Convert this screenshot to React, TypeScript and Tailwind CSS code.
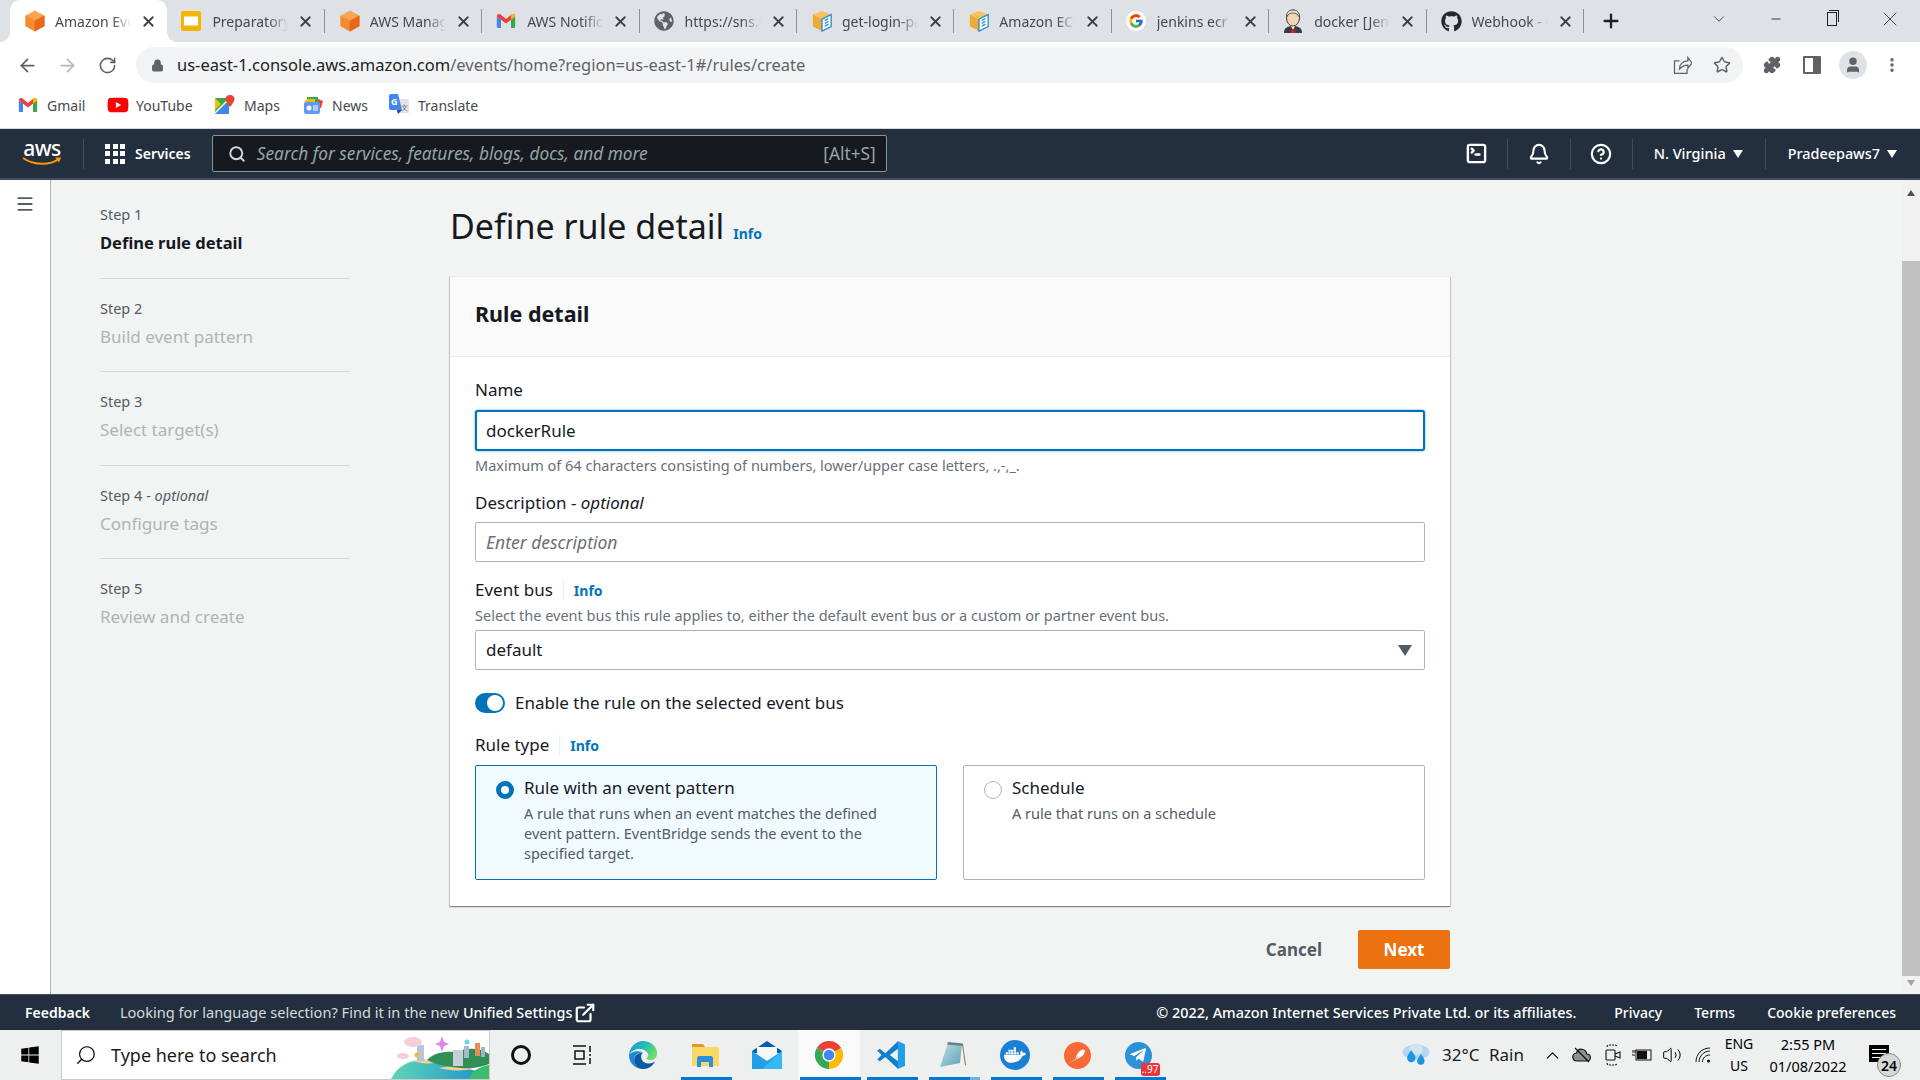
import { ReactNode } from "react";
import {
  ArrowLeft,
  ArrowRight,
  RotateCw,
  Lock,
  Star,
  Puzzle,
  User,
  EllipsisVertical,
  X,
  Plus,
  ChevronDown,
  Minus,
  Search,
  Bell,
  CircleHelp,
  Menu,
  SquareTerminal,
  ExternalLink,
  ChevronUp,
  Volume2,
} from "lucide-react";
import { FaGithub, FaWindows, FaDocker, FaTelegramPlane, FaYoutube, FaGlobeAmericas } from "react-icons/fa";
import { FcGoogle } from "react-icons/fc";

function Cube({ size = 22 }: { size?: number }) {
  return (
    <svg width={size} height={size} viewBox="0 0 24 24">
      <path d="M12 1l10 5.500L12 12 2 6.500z" fill="#f8a552" strokeLinejoin="round" stroke="#f8a552" />
      <path d="M2 6.500L12 12v11L2 17.500z" fill="#f58a2e" strokeLinejoin="round" stroke="#f58a2e" />
      <path d="M22 6.500L12 12v11l10-5.500z" fill="#e8681a" strokeLinejoin="round" stroke="#e8681a" />
    </svg>
  );
}

function DocCube() {
  return (
    <svg width="22" height="22" viewBox="0 0 24 24">
      <path d="M12 1l10 4-10 5L2 5z" fill="#f7c161" />
      <path d="M2 5l10 5v13L2 18z" fill="#efaa33" />
      <path d="M12 10l10-5v13l-10 5z" fill="#fff" stroke="#2f8fd0" strokeWidth="1.500" />
      <path d="M15 11.500l4-2M15 14.500l4-2M15 17.500l4-2" stroke="#2f8fd0" strokeWidth="1.500" />
    </svg>
  );
}

function Gmail({ size = 20 }: { size?: number }) {
  return (
    <svg width={size} height={size} viewBox="0 0 24 24">
      <path d="M1 7v12a1.500 1.500 0 0 0 1.500 1.500H6V10z" fill="#4285f4" />
      <path d="M23 7v12a1.500 1.500 0 0 1-1.500 1.500H18V10z" fill="#34a853" />
      <path d="M1 6.500C1 4 4 3 5.500 4.300L12 9.500l6.500-5.200C20 3 23 4 23 6.500L18 10.500 12 15l-6-4.500z" fill="#ea4335" />
      <path d="M18 10.500V4.800l.5-.5C20 3 23 4 23 6.500z" fill="#fbbc04" />
    </svg>
  );
}

function Slides() {
  return (
    <svg width="20" height="20" viewBox="0 0 20 20">
      <rect width="20" height="20" rx="2" fill="#f4b400" />
      <rect x="3" y="5.500" width="14" height="9" fill="#fff" />
    </svg>
  );
}

function Jenkins() {
  return (
    <svg width="20" height="24" viewBox="0 0 20 24">
      <path d="M1 24c0-5 3-7 9-7s9 2 9 7z" fill="#3b3b47" />
      <path d="M8 17h4l-2 4z" fill="#fff" />
      <path d="M8.500 20h3l1 4h-5z" fill="#c0272d" />
      <ellipse cx="10" cy="9" rx="6.500" ry="8" fill="#f0d6b5" stroke="#4a3a30" strokeWidth="1" />
      <path d="M3.500 8C3.500 3 6 1 10 1s6.500 2 6.500 7c-2-3-4-4-6.500-4S5 5 3.500 8z" fill="#e8e2d8" stroke="#4a3a30" strokeWidth=".8" />
    </svg>
  );
}

function Chrome({ size = 28 }: { size?: number }) {
  return (
    <svg width={size} height={size} viewBox="0 0 24 24">
      <path d="M12 12L1.600 6A12 12 0 0 1 22.400 6z" fill="#ea4335" />
      <path d="M12 12L22.400 6A12 12 0 0 1 12 24z" fill="#fbbc04" />
      <path d="M12 12L12 24A12 12 0 0 1 1.600 6z" fill="#34a853" />
      <circle cx="12" cy="12" r="5.700" fill="#fff" />
      <circle cx="12" cy="12" r="4.500" fill="#4285f4" />
    </svg>
  );
}

function Edge() {
  return (
    <svg width="30" height="30" viewBox="0 0 32 32">
      <defs>
        <linearGradient id="edgeTop" x1="0" y1="0" x2="1" y2="0.500">
          <stop offset="0" stopColor="#1296d8" />
          <stop offset="0.600" stopColor="#25c2b0" />
          <stop offset="1" stopColor="#6fdc6a" />
        </linearGradient>
      </defs>
      <path d="M16 1c8.500 0 15 6 15 13 0 5-3.500 7.500-7 7.500-2 0-4-.8-4.500-2 2-1 2.700-3 1.700-5-1.300-3-5-5-9.200-5C7 9.500 3 12 1 16 1.500 8 8 1 16 1z" fill="url(#edgeTop)" />
      <path d="M1 16c0 8.500 6.500 15 15 15-6 0-9.500-5-9.500-10 0-4 3.500-8 9-8-6-2.500-13 0-14.500 3z" fill="#1b8ad6" />
      <path d="M29 23c-3 2-6 2.300-9 1.800-4-.8-6-4-6-7 0-1.800.6-3.300 1.800-4.500C10.500 13.500 6.500 17 6.500 21.500 6.500 27 11 31 16.500 31c5.500 0 9.700-3.200 12.500-8z" fill="#0c59a4" />
    </svg>
  );
}

function Files() {
  return (
    <svg width="27" height="24" viewBox="0 0 27 24">
      <path d="M0 2a1 1 0 0 1 1-1h10l2 3h13a1 1 0 0 1 1 1v18H0z" fill="#f8d866" />
      <path d="M0 2a1 1 0 0 1 1-1h10l2 3H0z" fill="#dd9e1f" />
      <path d="M5 24v-9c0-1 1-2 2-2h12c1 0 2 1 2 2v9h-4v-5h-8v5z" fill="#2b8fdc" />
    </svg>
  );
}

function Mail() {
  return (
    <svg width="30" height="28" viewBox="0 0 30 28">
      <path d="M15 0L30 10v2H0v-2z" fill="#0b5ca8" />
      <path d="M5 6h20v12H5z" fill="#f4f8fb" />
      <path d="M0 10l15 10 15-10v18H0z" fill="#1e9fe6" />
      <path d="M30 10v18H10z" fill="#35b9f0" />
    </svg>
  );
}

function VsCode() {
  return (
    <svg width="30" height="30" viewBox="0 0 24 24">
      <path d="M17.500 1L23 3.500v17L17.500 23 7.500 13.500 3 17l-2-1.500L4.500 12 1 8.500 3 7l4.500 3.500z" fill="#0f7fcd" />
      <path d="M17.500 1L23 3.500v17L17.500 23z" fill="#1f9fe8" />
      <path d="M17.500 7L11 12l6.500 5z" fill="#eef0f0" />
    </svg>
  );
}

function Notepad() {
  return (
    <svg width="28" height="28" viewBox="0 0 28 28">
      <defs>
        <linearGradient id="padFace" x1="0" y1="0" x2="1" y2="1">
          <stop offset="0" stopColor="#bfe0e2" />
          <stop offset="1" stopColor="#5f9fb8" />
        </linearGradient>
      </defs>
      <path d="M10 2l14 1 3 21-6 1z" fill="#f3f1ea" />
      <path d="M23 3l1 0 3 21-1 .5z" fill="#8a7a5a" />
      <path d="M9 2l14 1-2 19-20 4z" fill="url(#padFace)" />
      <path d="M9 1l15 1.500-.3 2.500L8 3.500z" fill="#6e7f82" />
    </svg>
  );
}

function Docker() {
  return (
    <span className="flex h-[30px] w-[30px] items-center justify-center rounded-full bg-[#1c7fd6]">
      <FaDocker className="text-[22px] text-white" />
    </span>
  );
}

function Postman() {
  return (
    <svg width="27" height="27" viewBox="0 0 32 32">
      <circle cx="16" cy="16" r="16" fill="#f76935" />
      <path d="M7 25l7-6c1-5 5-10 9-10 2 0 2.500 3 0 6-2 2.500-5 4-8 5z" fill="#fff" />
      <path d="M7 25l9-7" stroke="#f76935" strokeWidth="1" />
    </svg>
  );
}

function Telegram() {
  return (
    <span className="relative -ml-[2px] flex h-[27px] w-[27px] items-center justify-center rounded-full bg-[#2a93d8]">
      <FaTelegramPlane className="text-[18px] text-white" />
      <span className="absolute -bottom-[7px] -right-[8px] rounded-[3px] bg-[#e8343c] px-px text-[10px] leading-[13px] text-white">..97</span>
    </span>
  );
}

const tabs: { title: string; icon: ReactNode }[] = [
  { title: "Amazon EventBridge", icon: <Cube /> },
  { title: "Preparatory steps", icon: <Slides /> },
  { title: "AWS Management", icon: <Cube /> },
  { title: "AWS Notifications", icon: <Gmail /> },
  { title: "https://sns.us-east", icon: <FaGlobeAmericas className="text-[20px] text-[#5f6368]" /> },
  { title: "get-login-password", icon: <DocCube /> },
  { title: "Amazon ECR", icon: <DocCube /> },
  {
    title: "jenkins ecr agent",
    icon: (
      <span className="flex h-[20px] w-[20px] items-center justify-center rounded-full bg-white">
        <FcGoogle className="text-[16px]" />
      </span>
    ),
  },
  { title: "docker [Jenkins]", icon: <Jenkins /> },
  { title: "Webhook - GitHub", icon: <FaGithub className="text-[21px] text-[#24292e]" /> },
];

function TabStrip() {
  return (
    <div className="flex h-[42px] shrink-0 items-end bg-[#dee1e6] pl-[10px] text-[14px] text-[#45484d]">
      {tabs.map((t, i) => (
        <div
          key={t.title}
          className={`relative flex h-[42px] w-[157.400px] shrink-0 items-center pl-[14px] ${i === 0 ? "rounded-t-[10px] bg-white" : ""}`}
        >
          {i === 0 && (
            <>
              <span className="absolute -left-[10px] bottom-0 h-[10px] w-[10px] bg-[radial-gradient(circle_at_0_0,transparent_10px,white_10px)]" />
              <span className="absolute -right-[10px] bottom-0 h-[10px] w-[10px] bg-[radial-gradient(circle_at_100%_0,transparent_10px,white_10px)]" />
            </>
          )}
          <span className="flex w-[31px] shrink-0 items-center">{t.icon}</span>
          <span className="w-[76px] shrink-0 overflow-hidden whitespace-nowrap [mask-image:linear-gradient(to_right,black_75%,transparent)]">
            {t.title}
          </span>
          <X className="ml-[9px] shrink-0 text-[#3c4043]" size={17} strokeWidth={2.500} />
          {i > 0 && <span className="absolute right-0 top-[9px] h-[24px] w-px bg-[#8d9096]" />}
        </div>
      ))}
      <Plus className="mb-[10px] ml-[16px] text-[#202124]" size={22} strokeWidth={2.500} />
      <div className="mb-[11px] ml-auto flex items-center text-[#202124]">
        <ChevronDown size={18} strokeWidth={1} />
        <Minus className="ml-[41px]" size={14} strokeWidth={1.500} />
        <span className="relative ml-[44px] h-[14px] w-[10px] border border-[#202124]">
          <span className="absolute -right-[3px] -top-[3px] h-[12px] w-[10px] border-r border-t border-[#202124]" />
        </span>
        <X className="ml-[41px] mr-[18px]" size={24} strokeWidth={0.800} />
      </div>
    </div>
  );
}

function Toolbar() {
  return (
    <div className="flex h-[46px] shrink-0 items-center bg-white">
      <ArrowLeft className="ml-[17px] text-[#5f6368]" size={21} />
      <ArrowRight className="ml-[19px] text-[#b5b8bc]" size={21} />
      <RotateCw className="ml-[20px] text-[#5f6368]" size={19} />
      <div className="ml-[19px] flex h-[36px] w-[1607px] items-center rounded-full bg-[#f1f3f4] pl-[15px]">
        <Lock className="text-[#5f6368]" size={13} fill="#5f6368" />
        <span className="ml-[13px] text-[16.500px] text-[#5f6368]">
          <span className="text-[#202124]">us-east-1.console.aws.amazon.com</span>/events/home?region=us-east-1#/rules/create
        </span>
        <svg className="ml-auto" width="20" height="20" viewBox="0 0 24 24" fill="none" stroke="#5f6368" strokeWidth="1.500">
          <path d="M9 7H3v15h15v-5" />
          <path d="M9 17c0-6 4-10 10-10V3l5 6.500-5 6.500v-4c-4 0-7 1.500-10 5z" />
        </svg>
        <Star className="ml-[21px] mr-[12px] text-[#5f6368]" size={18} />
      </div>
      <Puzzle className="ml-[20px] text-[#5f6368]" size={18} fill="#5f6368" />
      <span className="ml-[22px] flex h-[18px] w-[18px] justify-end rounded-[1px] border-2 border-[#5f6368]">
        <span className="h-full w-[6px] bg-[#5f6368]" />
      </span>
      <span className="ml-[18px] flex h-[28px] w-[28px] items-center justify-center rounded-full bg-[#dee1e6]">
        <User className="text-[#5f6368]" size={18} fill="#5f6368" />
      </span>
      <EllipsisVertical className="ml-[16px] text-[#5f6368]" size={18} strokeWidth={2.500} />
    </div>
  );
}

const bookmarks: { title: string; icon: ReactNode; w: string }[] = [
  { title: "Gmail", icon: <Gmail />, w: "w-[89px]" },
  { title: "YouTube", icon: <FaYoutube className="text-[22px] text-[#ff0000]" />, w: "w-[108px]" },
  {
    title: "Maps",
    icon: (
      <svg width="20" height="20" viewBox="0 0 20 20">
        <path d="M0 3h14v16H0z" fill="#34a853" />
        <path d="M0 19L14 7v12z" fill="#4285f4" />
        <path d="M0 3l6 6-6 6z" fill="#fbbc04" />
        <path d="M0 18L13 5" stroke="#fff" strokeWidth="1.500" />
        <path d="M15 0c3 0 4.500 2 4.500 4 0 3-4.500 8-4.500 8s-4.500-5-4.500-8c0-2 1.500-4 4.500-4z" fill="#ea4335" />
      </svg>
    ),
    w: "w-[88px]",
  },
  {
    title: "News",
    icon: (
      <svg width="20" height="20" viewBox="0 0 20 20">
        <path d="M4 2h11v6H4z" fill="#34a853" />
        <path d="M15 4l5 2-2 7H15z" fill="#ea4335" />
        <path d="M1 7l3-3h8v6z" fill="#fbbc04" />
        <rect x="1" y="7" width="16" height="12" rx="2" fill="#5e97f6" />
        <circle cx="6" cy="13" r="2.500" fill="#fff" />
        <path d="M10 11h5M10 13h5M10 15h5" stroke="#fff" strokeWidth="1.200" />
      </svg>
    ),
    w: "w-[86px]",
  },
  {
    title: "Translate",
    icon: (
      <svg width="20" height="22" viewBox="0 0 20 22">
        <rect x="8" y="5" width="12" height="14" rx="1" fill="#e2e3e6" />
        <path d="M0 2a2 2 0 0 1 2-2h7l4 16H2a2 2 0 0 1-2-2z" fill="#4285f4" />
        <path d="M8 16h5l-4 4z" fill="#2f3fa8" />
        <text x="2" y="11" fontSize="9" fontWeight="700" fill="#fff">G</text>
        <text x="12" y="16" fontSize="7" fill="#666">文</text>
      </svg>
    ),
    w: "",
  },
];

function Bookmarks() {
  return (
    <div className="flex h-[40px] shrink-0 items-center bg-white pb-[6px] pl-[18px] text-[14px] text-[#45484d]">
      {bookmarks.map((b) => (
        <div key={b.title} className={`flex items-center ${b.w}`}>
          <span className="flex w-[29px] items-center">{b.icon}</span>
          <span>{b.title}</span>
        </div>
      ))}
    </div>
  );
}

function Tri({ className = "" }: { className?: string }) {
  return <span className={`inline-block h-0 w-0 border-x-[5px] border-t-[8px] border-x-transparent border-t-white ${className}`} />;
}

function ConsoleNav() {
  return (
    <div className="flex h-[52px] shrink-0 items-center border-b-2 border-t border-b-[#414d5c] border-t-[#d5d7da] bg-[#232f3e] text-[14px] text-white">
      <div className="flex w-[83px] flex-col items-center pl-px">
        <span className="text-[21px] font-medium leading-[17px] tracking-[-0.500px]">aws</span>
        <svg width="40" height="10" viewBox="0 0 40 10">
          <path d="M1 1c10 7 26 8 36 1" fill="none" stroke="#ff9900" strokeWidth="2" />
          <path d="M33 0.500l6 0-2 5z" fill="#ff9900" />
        </svg>
      </div>
      <div className="h-[30px] w-px bg-[#414d5c]" />
      <div className="ml-[21px] grid w-[20px] grid-cols-3 gap-[2.500px]">
        {Array.from({ length: 9 }).map((_, i) => (
          <span key={i} className="h-[5px] w-[5px] bg-white" />
        ))}
      </div>
      <span className="ml-[10px] font-semibold">Services</span>
      <div className="ml-[21px] flex h-[37px] w-[675px] items-center rounded-[2px] border border-[#879596] bg-[#16191f] pl-[15px] pr-[10px] text-[17.300px] text-[#95a5a6]">
        <Search className="text-[#d5dbdb]" size={18} strokeWidth={2.500} />
        <span className="ml-[11px] italic">Search for services, features, blogs, docs, and more</span>
        <span className="ml-auto">[Alt+S]</span>
      </div>
      <SquareTerminal className="ml-[578px]" size={23} strokeWidth={2.500} />
      <span className="ml-[19px] h-[30px] w-px bg-[#414d5c]" />
      <Bell className="ml-[20px]" size={22} strokeWidth={2.300} />
      <span className="ml-[20px] h-[30px] w-px bg-[#414d5c]" />
      <CircleHelp className="ml-[19px]" size={22} strokeWidth={2.400} />
      <span className="ml-[20px] h-[30px] w-px bg-[#414d5c]" />
      <span className="ml-[21px] text-[14.500px] font-medium">N. Virginia</span>
      <Tri className="ml-[7px]" />
      <span className="ml-[22px] h-[30px] w-px bg-[#414d5c]" />
      <span className="ml-[22px] text-[14.400px] font-medium">Pradeepaws7</span>
      <Tri className="ml-[7px]" />
    </div>
  );
}

const steps = [
  { step: "Step 1", title: "Define rule detail" },
  { step: "Step 2", title: "Build event pattern" },
  { step: "Step 3", title: "Select target(s)" },
  { step: "Step 4", optional: true, title: "Configure tags" },
  { step: "Step 5", title: "Review and create" },
];

function Steps() {
  return (
    <ol className="ml-[49px] mt-[5px] w-[250px] shrink-0">
      {steps.map((s, i) => (
        <li key={s.step} className={`pb-[22.500px] pt-[19px] ${i < 4 ? "border-b border-[#d5dbdb]" : ""}`}>
          <div className="text-[14.500px] leading-[20px] text-[#545b64]">
            {s.step}
            {s.optional && (
              <>
                {" - "}
                <i>optional</i>
              </>
            )}
          </div>
          <div className={`mt-[7px] leading-[24px] ${i === 0 ? "text-[16.500px] font-bold text-[#16191f]" : "text-[17px] text-[#aab7b8]"}`}>{s.title}</div>
        </li>
      ))}
    </ol>
  );
}

function Info({ className = "" }: { className?: string }) {
  return <span className={`text-[14px] font-bold text-[#0073bb] ${className}`}>Info</span>;
}

function FieldLabel({ children, info }: { children: ReactNode; info?: boolean }) {
  return (
    <div className="flex h-[24px] items-center text-[17px] text-[#16191f]">
      <span>{children}</span>
      {info && (
        <>
          <span className="mx-[10px] h-[20px] w-px bg-[#eaeded]" />
          <Info />
        </>
      )}
    </div>
  );
}

function Tile({ selected, title, children }: { selected?: boolean; title: string; children: ReactNode }) {
  return (
    <div className={`flex h-[115px] w-[462px] rounded-[2px] border pl-[20px] pt-[10px] ${selected ? "border-[#0073bb] bg-[#f1faff]" : "border-[#aab7b8] bg-white"}`}>
      {selected ? (
        <span className="mt-[5px] h-[18px] w-[18px] shrink-0 rounded-full border-[5px] border-[#0073bb] bg-white" />
      ) : (
        <span className="mt-[5px] h-[18px] w-[18px] shrink-0 rounded-full border border-[#aab7b8] bg-white" />
      )}
      <div className="ml-[10px]">
        <div className="text-[17px] leading-[24px] text-[#16191f]">{title}</div>
        <div className="mt-[3px] w-[380px] text-[14.500px] leading-[20px] text-[#545b64]">{children}</div>
      </div>
    </div>
  );
}

function RuleCard() {
  return (
    <section className="mt-[25px] h-[630px] border-t border-[#eaeded] bg-white shadow-[0_1px_1px_0_rgba(0,28,36,0.3),1px_1px_1px_0_rgba(0,28,36,0.15),-1px_1px_1px_0_rgba(0,28,36,0.15)]">
      <div className="flex h-[80px] items-center border-b border-[#eaeded] bg-[#fafafa] px-[25px] pb-[5px] text-[21.500px] font-bold text-[#16191f]">Rule detail</div>
      <div className="px-[25px] pt-[21px]">
        <FieldLabel>Name</FieldLabel>
        <div className="mt-[8px] flex h-[41px] items-center rounded-[3px] border-2 border-[#0073bb] bg-white px-[9px] text-[17px] text-[#16191f] shadow-[0_0_2px_#00a1c9]">dockerRule</div>
        <div className="mt-[4px] h-[20px] text-[14.500px] leading-[20px] text-[#687078]">Maximum of 64 characters consisting of numbers, lower/upper case letters, .,-,_.</div>
        <div className="mt-[16px]">
          <FieldLabel>
            Description - <i>optional</i>
          </FieldLabel>
        </div>
        <div className="mt-[7px] flex h-[40px] items-center rounded-[2px] border border-[#aab7b8] bg-white px-[10px] text-[17.500px] italic text-[#687078]">Enter description</div>
        <div className="mt-[16px]">
          <FieldLabel info>Event bus</FieldLabel>
        </div>
        <div className="mt-[3px] text-[14.500px] leading-[20px] text-[#687078]">Select the event bus this rule applies to, either the default event bus or a custom or partner event bus.</div>
        <div className="mt-[5px] flex h-[40px] items-center justify-between rounded-[2px] border border-[#aab7b8] bg-white px-[10px] text-[17px] text-[#16191f]">
          default
          <span className="mr-[2px] h-0 w-0 border-x-[7px] border-t-[11px] border-x-transparent border-t-[#545b64]" />
        </div>
        <div className="mt-[21px] flex h-[24px] items-center text-[17px] text-[#16191f]">
          <span className="flex h-[20px] w-[30px] items-center justify-end rounded-full bg-[#0073bb] pr-[2px]">
            <span className="h-[16px] w-[16px] rounded-full bg-white" />
          </span>
          <span className="ml-[10px]">Enable the rule on the selected event bus</span>
        </div>
        <div className="mt-[18px]">
          <FieldLabel info>Rule type</FieldLabel>
        </div>
        <div className="mt-[8px] flex justify-between">
          <Tile selected title="Rule with an event pattern">
            A rule that runs when an event matches the defined event pattern. EventBridge sends the event to the specified target.
          </Tile>
          <Tile title="Schedule">A rule that runs on a schedule</Tile>
        </div>
      </div>
    </section>
  );
}

function MainContent() {
  return (
    <main className="ml-[100px] w-[1000px] shrink-0">
      <div className="flex h-[71px] items-end">
        <h1 className="text-[34px] font-normal leading-[50px] text-[#16191f]">Define rule detail</h1>
        <Info className="mb-[7px] ml-[9px]" />
      </div>
      <RuleCard />
      <div className="mt-[24px] flex items-center justify-end">
        <span className="text-[17px] font-bold text-[#545b64]">Cancel</span>
        <span className="ml-[36px] flex h-[39px] w-[92px] items-center justify-center rounded-[2px] bg-[#ec7211] text-[17px] font-bold text-white">Next</span>
      </div>
    </main>
  );
}

function ScrollBar() {
  return (
    <div className="ml-auto flex w-[18px] flex-col items-center bg-[#f1f1f1]">
      <span className="mt-[10px] h-0 w-0 border-x-[4px] border-b-[6px] border-x-transparent border-b-[#505050]" />
      <div className="mt-[65px] h-[715px] w-full bg-[#c1c1c1]" />
      <span className="mt-[4px] h-0 w-0 border-x-[4px] border-t-[6px] border-x-transparent border-t-[#a3a3a3]" />
    </div>
  );
}

function ConsoleFooter() {
  return (
    <footer className="flex h-[36px] shrink-0 items-center border-t border-t-[#414d5c] bg-[#232f3e] pl-[25px] pr-[24px] text-[14px] text-white">
      <span className="font-semibold">Feedback</span>
      <span className="ml-[30px] text-[14.600px] text-[#d5dbdb]">Looking for language selection? Find it in the new</span>
      <span className="ml-[4px] text-[14.400px] font-medium">Unified Settings</span>
      <ExternalLink className="ml-[2px]" size={22} strokeWidth={2.400} />
      <span className="ml-auto text-[14.400px] font-medium">© 2022, Amazon Internet Services Private Ltd. or its affiliates.</span>
      <span className="ml-[38px] font-medium">Privacy</span>
      <span className="ml-[32px] font-medium">Terms</span>
      <span className="ml-[32px] font-medium">Cookie preferences</span>
    </footer>
  );
}

const taskIcons: { icon: ReactNode; active?: boolean; hl?: boolean; partial?: boolean }[] = [
  { icon: <Edge /> },
  { icon: <Files />, active: true },
  { icon: <Mail /> },
  { icon: <Chrome />, active: true, hl: true },
  { icon: <VsCode />, active: true },
  { icon: <Notepad />, active: true, partial: true },
  { icon: <Docker />, active: true },
  { icon: <Postman />, active: true },
  { icon: <Telegram />, active: true },
];

function SearchArt() {
  return (
    <svg className="absolute bottom-0 right-0" width="98" height="48" viewBox="0 0 98 48">
      <defs>
        <linearGradient id="sea" x1="0" y1="0" x2="1" y2="0">
          <stop offset="0" stopColor="#5fd6b4" />
          <stop offset="1" stopColor="#1c8fd0" />
        </linearGradient>
      </defs>
      <path d="M0 48C6 36 16 30 30 29l40 8c14 2 24 4 28 11z" fill="url(#sea)" />
      <path d="M22 30c8-3 18-2 26 1-8 2-18 2-26-1z" fill="#f3cf9a" />
      <path d="M48 37c12-2 24-2 34 1-10 2-24 2-34-1z" fill="#f3cf9a" />
      <path d="M36 29c8-8 18-9 30-8 10-5 24-4 32 2v10c-8 3-16 5-28 4-12-1-24-3-34-8z" fill="#2f8f55" />
      <path d="M78 48c2-8 10-12 20-14v14z" fill="#3dbb6e" />
      <rect x="26" y="14" width="7" height="16" fill="#b5c6dc" />
      <rect x="62" y="19" width="10" height="16" fill="#c7cfd8" />
      <rect x="73" y="15" width="5" height="12" fill="#a7b7cf" />
      <rect x="84" y="12" width="5" height="13" fill="#e98b53" />
      <rect x="90" y="16" width="4" height="10" fill="#9fb3cc" />
      <circle cx="76" cy="11" r="2.500" fill="#66d9ea" />
      <ellipse cx="22" cy="11" rx="9" ry="5" fill="#f4cfd8" />
      <ellipse cx="12" cy="25" rx="6" ry="3" fill="#f4cfd8" />
      <path d="M51 5l2 6 5 2-5 2-2 6-2-6-5-2 5-2z" fill="#e083ee" />
      <circle cx="26" cy="24" r="2.500" fill="#f6b73c" />
    </svg>
  );
}

function Taskbar() {
  return (
    <div className="flex h-[50px] shrink-0 items-center bg-[#eef0f0] text-black">
      <FaWindows className="ml-[20px] text-[20px]" />
      <div className="relative ml-[21px] flex h-[50px] w-[429px] items-center overflow-hidden border border-[#c9cbcc] bg-white pl-[13px]">
        <Search className="-scale-x-100" size={22} strokeWidth={1.300} />
        <span className="ml-[14px] text-[18px] text-[#1a1a1a]">Type here to search</span>
        <SearchArt />
      </div>
      <span className="flex w-[61px] justify-center">
        <span className="h-[20px] w-[20px] rounded-full border-[3px] border-[#111]" />
      </span>
      <span className="flex w-[61px] justify-center">
        <svg width="20" height="20" viewBox="0 0 20 20" fill="none" stroke="#111" strokeWidth="1.500">
          <path d="M1 1h13M1 19h13M3 6h9v8H3zM18 1v6M18 9v2M18 13v6" />
        </svg>
      </span>
      {taskIcons.map((t, i) => (
        <span key={i} className={`relative flex h-[50px] w-[62px] items-center justify-center ${t.hl ? "bg-[#f9f9f9]" : ""}`}>
          {t.icon}
          {t.active && <span className={`absolute bottom-0 h-[3px] bg-[#0078d4] ${t.hl ? "-right-px left-[2px]" : "left-[7px] right-[4px]"}`} />}
          {t.partial && <span className="absolute bottom-0 right-[4px] h-[3px] w-[10px] bg-[#6fb0e6]" />}
        </span>
      ))}
      <svg className="ml-[232px]" width="28" height="24" viewBox="0 0 28 24">
        <ellipse cx="14" cy="9" rx="13.500" ry="7.500" fill="#b4d6f0" />
        <ellipse cx="14" cy="6" rx="7" ry="5.500" fill="#cfe5f6" />
        <path d="M9 7c3 4 4.500 6 4.500 8a4.200 4.200 0 0 1-8.400 0C5.100 13 7 10 9 7zM19 11c2.500 3.500 3.500 5 3.500 7a3.700 3.700 0 0 1-7.400 0c0-2 2-4 3.900-7z" fill="#1f95e2" />
      </svg>
      <span className="ml-[12px] w-[36px] whitespace-nowrap text-[17px] text-[#1a1a1a]">32°C</span>
      <span className="ml-[11px] w-[34px] whitespace-nowrap text-[17px] text-[#1a1a1a]">Rain</span>
      <ChevronUp className="ml-[19px]" size={21} strokeWidth={1.300} />
      <svg className="ml-[9px]" width="20" height="20" viewBox="0 0 20 20">
        <path d="M5 16a4 4 0 0 1-.5-8C5.500 5 8 3.500 11 4.500c2 .6 3.500 2.500 3.700 4.500A3.500 3.500 0 0 1 15 16z" fill="#8d8f90" stroke="#111" strokeWidth="1.200" />
        <path d="M3 3l14 14" stroke="#111" strokeWidth="1.300" />
      </svg>
      <svg className="ml-[13px]" width="16" height="24" viewBox="0 0 16 24" fill="none" stroke="#111" strokeWidth="1.100">
        <path d="M2 4c0-1 1-2 2-2h6c1 0 2 1 2 2M2 20c0 1 1 2 2 2h6c1 0 2-1 2-2" strokeDasharray="2 1" />
        <rect x="1" y="7" width="9" height="10" rx="1" />
        <path d="M10 11l5-2v6l-5-2" />
      </svg>
      <svg className="ml-[11px]" width="20" height="14" viewBox="0 0 20 14">
        <path d="M0 7h3M1 2v3M3 2v3" stroke="#111" strokeWidth="1" />
        <rect x="4" y="2" width="15" height="10" fill="none" stroke="#111" strokeWidth="1" />
        <rect x="5" y="3" width="10" height="8" fill="#111" />
      </svg>
      <Volume2 className="ml-[10px]" size={20} strokeWidth={1.200} />
      <svg className="ml-[13px]" width="16" height="18" viewBox="0 0 16 18" fill="none" stroke="#111" strokeWidth="1">
        <path d="M1 16C1 8 7 2 15 2M4 16c0-6 5-11 11-11M7.500 16c0-4 3-7 7.500-7" />
        <circle cx="13.500" cy="15" r="1.500" fill="#111" stroke="none" />
      </svg>
      <span className="ml-[10px] flex w-[36px] flex-col items-center text-[14px] leading-[22px]">
        <span>ENG</span>
        <span>US</span>
      </span>
      <span className="ml-[9px] flex w-[84px] flex-col items-center text-[14.500px] leading-[22px]">
        <span>2:55 PM</span>
        <span>01/08/2022</span>
      </span>
      <span className="relative mb-[3px] ml-[19px] flex h-[17px] w-[20px] flex-col justify-center gap-[3px] bg-black px-[3px]">
        <span className="h-px bg-white" />
        <span className="h-px bg-white" />
        <span className="h-px bg-white" />
        <span className="absolute -bottom-[15px] -right-[12px] flex h-[24px] w-[24px] items-center justify-center rounded-full border border-[#888] bg-[#d8d8d8] text-[14px] font-semibold">24</span>
      </span>
    </div>
  );
}

export default function App() {
  return (
    <div className="flex h-[1080px] w-[1920px] flex-col overflow-hidden bg-white font-['Noto_Sans','Open_Sans',sans-serif]">
      <TabStrip />
      <Toolbar />
      <Bookmarks />
      <ConsoleNav />
      <div className="flex min-h-0 flex-1 bg-[#f2f3f3]">
        <div className="w-[51px] shrink-0 border-r border-[#aab7b8] bg-white pl-[15px] pt-[14px]">
          <Menu className="text-[#545b64]" size={20} strokeWidth={2.200} />
        </div>
        <Steps />
        <MainContent />
        <ScrollBar />
      </div>
      <ConsoleFooter />
      <Taskbar />
    </div>
  );
}
